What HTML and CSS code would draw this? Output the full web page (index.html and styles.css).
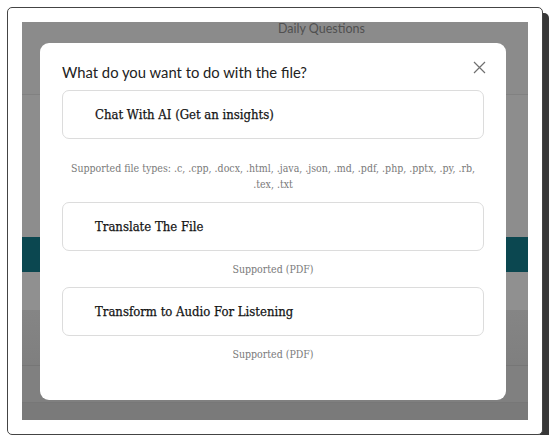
FILE: index.html
```html
<!DOCTYPE html>
<html lang="en">
<head>
    <meta charset="UTF-8">
    <meta name="viewport" content="width=device-width, initial-scale=1.0">
    <title>Upload options</title>
    <link rel="stylesheet" href="styles.css">
</head>
<body>
<div class="frame">
    <div class="screen">
        <div class="page">
            <div class="page-head">Daily Questions</div>
            <div class="page-row row-a"></div>
            <div class="page-band"></div>
            <div class="page-row row-b"></div>
            <div class="page-row row-c"></div>
            <div class="page-row row-d"></div>
            <div class="page-row row-e"></div>
        </div>

        <div class="backdrop">
            <div class="modal">
                <div class="modal-head">
                    <h2>What do you want to do with the file?</h2>
                    <button class="close" aria-label="Close">
                        <svg width="13" height="13" viewBox="0 0 13 13">
                            <path d="M1 1 L12 12 M12 1 L1 12" stroke="#707070" stroke-width="1.2" fill="none"/>
                        </svg>
                    </button>
                </div>

                <button class="option">Chat With AI (Get an insights)</button>
                <p class="note first">Supported file types: .c, .cpp, .docx, .html, .java, .json, .md, .pdf, .php, .pptx, .py, .rb, .tex, .txt</p>

                <button class="option">Translate The File</button>
                <p class="note">Supported (PDF)</p>

                <button class="option">Transform to Audio For Listening</button>
                <p class="note">Supported (PDF)</p>
            </div>
        </div>
    </div>
</div>
</body>
</html>
```

FILE: styles.css
```css
body {
    margin: 0;
    background-color: #fff;
    font-family: Lato, "Open Sans", sans-serif;
}

.frame {
    width: 506px;
    height: 398px;
    margin: 7px 0 0 7px;
    padding: 14px;
    border: 1px solid #444;
    border-radius: 5px;
    background-color: #fff;
    box-shadow: 6px 6px 0 #383838;
}

.screen {
    position: relative;
    height: 100%;
    overflow: hidden;
    background-color: #8b8b8b;
}

/* dimmed page behind the dialog */
.page {
    display: flex;
    flex-direction: column;
    height: 100%;
}
.page-head {
    height: 72px;
    padding-left: 256px;
    border-bottom: 1px solid #818181;
    color: #505050;
    font-size: 12.5px;
    line-height: 13px;
}
.page-row {
    flex-shrink: 0;
}
.row-a {
    height: 142px;
    background-color: #8d8d8d;
}
.page-band {
    height: 35px;
    background-color: #0b4750;
}
.row-b {
    height: 38px;
    background-color: #909090;
}
.row-c {
    height: 55px;
    background: linear-gradient(#858585, #7f7f7f);
    border-bottom: 1px solid #767676;
}
.row-d {
    height: 36px;
    background-color: #808080;
    border-bottom: 1px solid #777;
}
.row-e {
    flex-grow: 1;
    background-color: #7a7a7a;
}

.backdrop {
    position: absolute;
    inset: 0;
    padding: 21px 0 0 18px;
}

.modal {
    width: 466px;
    height: 357px;
    box-sizing: border-box;
    padding: 0 22px;
    background-color: #fff;
    border-radius: 9px;
    display: flex;
    flex-direction: column;
}

.modal-head {
    display: flex;
    align-items: center;
    justify-content: space-between;
    padding-top: 18px;
    margin-bottom: 7px;
}
.modal-head h2 {
    margin: 0;
    color: #222;
    font-size: 14.8px;
    font-weight: 400;
    line-height: 22px;
}
.close {
    display: flex;
    padding: 0;
    margin-right: -2px;
    margin-top: -9px;
    border: none;
    background: none;
    cursor: pointer;
}

.option {
    height: 49px;
    padding: 0 0 0 32px;
    border: 1px solid #dcdcdc;
    border-radius: 7px;
    background-color: #fff;
    color: #151515;
    font-family: "DejaVu Serif Condensed", "Liberation Serif", serif;
    font-size: 13px;
    -webkit-text-stroke: 0.25px #151515;
    text-align: left;
    cursor: pointer;
}

.note {
    margin: 10px 0;
    color: #7a7a7a;
    font-family: "DejaVu Serif Condensed", "Liberation Serif", serif;
    font-size: 10.5px;
    line-height: 16px;
    text-align: center;
}
.note.first {
    margin-top: 21px;
    padding: 0 8px;
}
```
